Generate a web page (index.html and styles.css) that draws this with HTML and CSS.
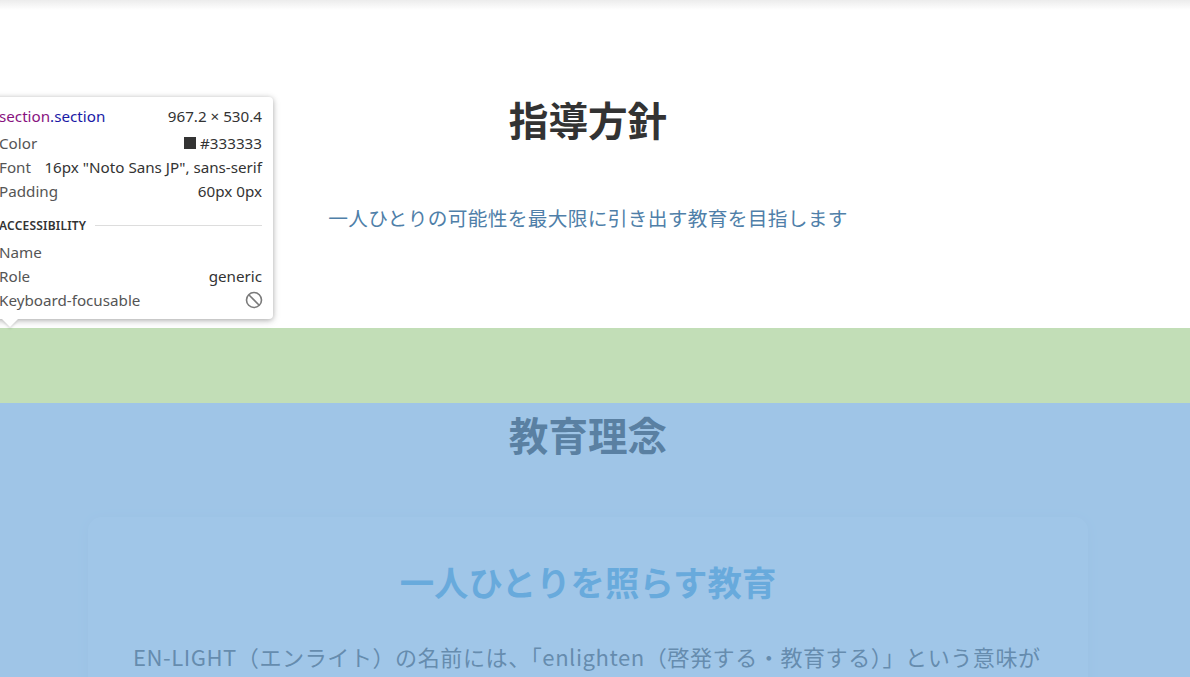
FILE: index.html
```html
<!DOCTYPE html>
<html lang="ja">
<head>
<meta charset="utf-8">
<title>EN-LIGHT</title>
<link rel="stylesheet" href="styles.css">
</head>
<body>
<section class="section section-policy">
  <div class="container">
    <h2 class="section-title">指導方針</h2>
    <p class="section-subtitle">一人ひとりの可能性を最大限に引き出す教育を目指します</p>
  </div>
</section>

<section class="section section-philosophy">
  <div class="hl-padding"></div>
  <div class="hl-content"></div>
  <div class="container">
    <h2 class="section-title title-2">教育理念</h2>
    <div class="card">
      <h3 class="card-title">一人ひとりを照らす教育</h3>
      <p class="card-text">EN-LIGHT（エンライト）の名前には、「enlighten（啓発する・教育する）」という意味が込められています。私たちは生徒一人ひとりの個性と可能性を照らし出し、自ら学ぶ力を育てます。</p>
    </div>
  </div>
</section>

<div class="tooltip">
  <div class="tt-row tt-head">
    <span class="tt-tag"><span class="tt-el">section</span><span class="tt-cls">.section</span></span>
    <span class="tt-val">967.2 × 530.4</span>
  </div>
  <div class="tt-row"><span class="tt-key">Color</span><span class="tt-val"><span class="swatch"></span>#333333</span></div>
  <div class="tt-row"><span class="tt-key">Font</span><span class="tt-val">16px "Noto Sans JP", sans-serif</span></div>
  <div class="tt-row"><span class="tt-key">Padding</span><span class="tt-val">60px 0px</span></div>
  <div class="tt-sec"><span class="tt-sec-label">ACCESSIBILITY</span><span class="tt-line"></span></div>
  <div class="tt-row tt-first"><span class="tt-key">Name</span><span class="tt-val"></span></div>
  <div class="tt-row"><span class="tt-key">Role</span><span class="tt-val">generic</span></div>
  <div class="tt-row"><span class="tt-key">Keyboard-focusable</span>
    <svg class="ban" width="18" height="18" viewBox="0 0 18 18"><circle cx="9" cy="9" r="7.5" fill="none" stroke="#7a7a7a" stroke-width="1.6"/><line x1="3.8" y1="3.8" x2="14.2" y2="14.2" stroke="#7a7a7a" stroke-width="1.6"/></svg>
  </div>
  <div class="tt-arrow"></div>
</div>
</body>
</html>
```
FILE: styles.css
```css
html, body {
  margin: 0;
  padding: 0;
}
body {
  font-family: "Noto Sans CJK JP", "Noto Sans", sans-serif;
  color: #333333;
  background: #ffffff;
  width: 1190px;
  height: 677px;
  overflow: hidden;
  position: relative;
}
.section {
  position: relative;
  padding-right: 14px;
}
.container {
  max-width: 1000px;
  margin: 0 auto;
  position: relative;
}
.section-policy {
  background: linear-gradient(#ececec 0px, #ffffff 10px);
  padding-top: 95px;
  height: 233px;
  box-sizing: content-box;
}
.section-title {
  margin: 0;
  text-align: center;
  font-size: 39.6px;
  font-weight: 700;
  line-height: 48px;
  color: #333333;
}
.section-subtitle {
  margin: 60px 0 0;
  text-align: center;
  font-size: 19.7px;
  line-height: 30px;
  letter-spacing: 0.32px;
  color: #4f7fa9;
}
.section-philosophy {
  background: #fbfcfd;
  padding-top: 75px;
  height: 600px;
}
.title-2 {
  line-height: 62px;
}
.card {
  margin-top: 52px;
  background: #ffffff;
  border-radius: 14px;
  box-shadow: 0 2px 14px rgba(0, 0, 0, 0.05);
  padding: 40px 40px 40px 45px;
}
.card-title {
  margin: 0;
  text-align: center;
  font-size: 34.4px;
  font-weight: 700;
  line-height: 48px;
  color: #5dacdc;
  padding-right: 5px;
}
.card-text {
  margin: 33px 0 0;
  font-size: 22.1px;
  line-height: 37px;
  letter-spacing: 0.52px;
  color: #555555;
}
.hl-padding, .hl-content {
  position: absolute;
  left: 0;
  right: 0;
  z-index: 5;
  pointer-events: none;
}
.hl-padding {
  top: 0;
  height: 75px;
  background: rgba(147, 196, 125, 0.55);
}
.hl-content {
  top: 75px;
  bottom: 0;
  background: rgba(111, 168, 220, 0.66);
}

/* devtools tooltip */
.tooltip {
  position: absolute;
  left: -12px;
  top: 97px;
  width: 285px;
  box-sizing: border-box;
  padding: 7px 11px 7px;
  background: #ffffff;
  border-radius: 4px;
  box-shadow: 0 1px 5px rgba(0, 0, 0, 0.25), 0 2px 10px rgba(0, 0, 0, 0.12);
  font-family: "Noto Sans", "Open Sans", sans-serif;
  font-size: 15.2px;
  color: #333333;
  z-index: 10;
}
.tt-row {
  display: flex;
  justify-content: space-between;
  align-items: center;
  height: 24px;
  white-space: nowrap;
}
.tt-head {
  margin-bottom: 3px;
}
.tt-el {
  color: #881280;
}
.tt-cls {
  color: #1a1aa6;
}
.tt-key {
  color: #555555;
}
.tt-val {
  display: flex;
  align-items: center;
  color: #333333;
}
.swatch {
  display: inline-block;
  width: 12px;
  height: 12px;
  background: #333333;
  margin-right: 4px;
}
.tt-sec {
  display: flex;
  align-items: center;
  height: 20px;
  margin-top: 12px;
}
.tt-sec-label {
  font-size: 12px;
  font-weight: 600;
  color: #333333;
  letter-spacing: 0.2px;
}
.tt-line {
  flex: 1;
  height: 1px;
  background: #dddddd;
  margin-left: 9px;
}
.tt-first {
  margin-top: 5px;
}
.ban {
  margin-right: -1px;
}
.tt-arrow {
  position: absolute;
  left: 14px;
  bottom: -8px;
  width: 0;
  height: 0;
  border-left: 8px solid transparent;
  border-right: 8px solid transparent;
  border-top: 8px solid #ffffff;
  filter: drop-shadow(0 2px 1px rgba(0, 0, 0, 0.12));
}
```
